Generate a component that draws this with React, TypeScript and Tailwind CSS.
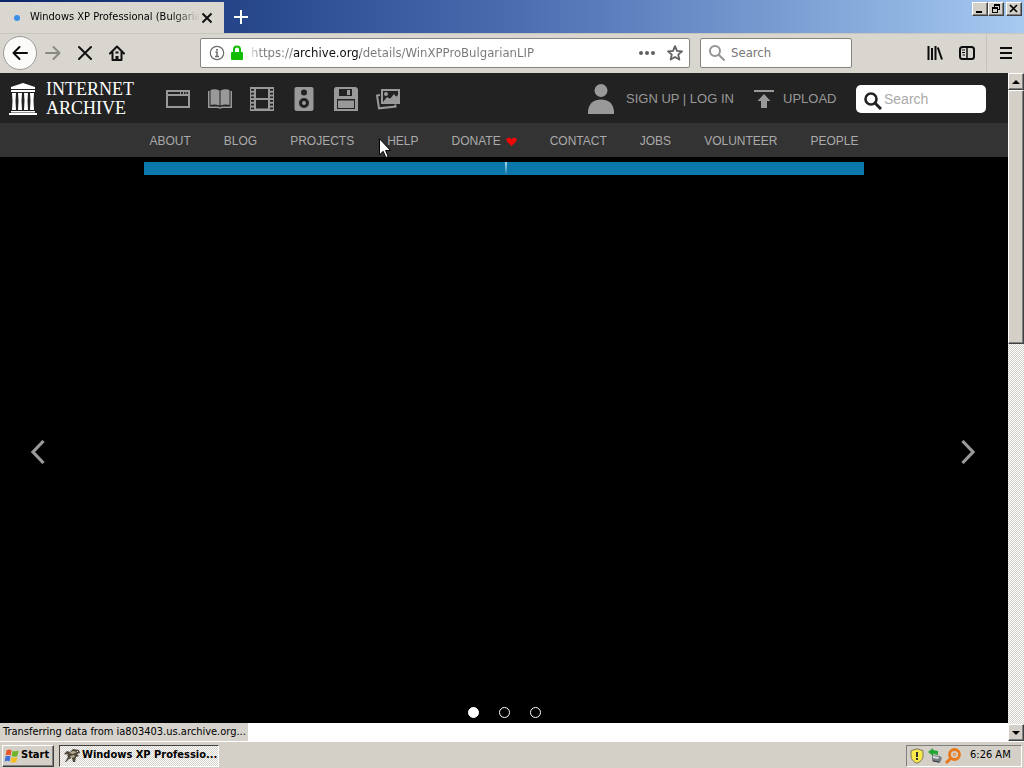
import React from "react";

const raised =
  "border border-t-white border-l-white border-r-[#404040] border-b-[#404040] bg-[#d4d0c8] shadow-[inset_-1px_-1px_0_#808080]";
const dither =
  "bg-[repeating-conic-gradient(#ffffff_0%_25%,#d4d0c8_0%_50%)] bg-[length:2px_2px]";

function TitleBar() {
  return (
    <header className="flex h-[33px] shrink-0 items-start justify-between bg-linear-to-r from-[#0a246a] via-[#4a6db0] to-[#a6caf0]">
      <div className="flex h-full items-end">
        <div className="flex h-[31px] w-[224px] items-center bg-[#dad7d1] pr-2">
          <span className="ml-[14px] size-[6px] shrink-0 rounded-full bg-[#3b8ee6]" />
          <span className="ml-[10px] w-[170px] shrink-0 whitespace-nowrap bg-linear-to-r from-black from-80% to-[#dad7d1] bg-clip-text text-[11px] text-transparent">
            Windows XP Professional (Bulgaria
          </span>
          <button aria-label="Close tab" className="flex size-[14px] shrink-0 items-center justify-center">
            <svg viewBox="0 0 12 12" className="size-[12px]" fill="none" stroke="#111" strokeWidth="2">
              <path d="M1.5 1.5l9 9M10.5 1.5l-9 9" />
            </svg>
          </button>
        </div>
        <button aria-label="New tab" className="flex h-[31px] w-[33px] items-center justify-center pb-[2px]">
          <svg viewBox="0 0 14 14" className="size-[14px]" fill="none" stroke="#fff" strokeWidth="2">
            <path d="M7 0v14M0 7h14" />
          </svg>
        </button>
      </div>
      <div className="flex pt-[2px] pr-[2px]">
        <button aria-label="Minimize" className={`flex h-[14px] w-[16px] items-center justify-center ${raised}`}>
          <svg viewBox="0 0 12 10" className="h-[10px] w-[12px]" shapeRendering="crispEdges">
            <path d="M2 7h6v2H2z" />
          </svg>
        </button>
        <button aria-label="Restore" className={`flex h-[14px] w-[16px] items-center justify-center ${raised}`}>
          <svg viewBox="0 0 12 10" className="h-[10px] w-[12px]" shapeRendering="crispEdges">
            <path d="M4 0h6v6H8V5h1V2H5v1H4zM2 3h6v6H2zM3 5v3h4V5z" fillRule="evenodd" />
          </svg>
        </button>
        <button aria-label="Close" className={`ml-[2px] flex h-[14px] w-[16px] items-center justify-center ${raised}`}>
          <svg viewBox="0 0 12 10" className="h-[10px] w-[12px]" fill="none" stroke="#000" strokeWidth="1.7">
            <path d="M2 1l7 7M9 1L2 8" />
          </svg>
        </button>
      </div>
    </header>
  );
}

function Toolbar() {
  return (
    <div className="flex h-[40px] shrink-0 items-center border-t border-[#c9c6c0] bg-[#d9d6d0] pb-[2px]">
      <div className="flex items-center pl-[3px]">
        <button aria-label="Back" className="flex size-[34px] items-center justify-center rounded-full border border-[#9b9995] bg-[#fbfbfa]">
          <svg viewBox="0 0 16 16" className="size-[16px]" fill="none" stroke="#0c0c0d" strokeWidth="2" strokeLinecap="round" strokeLinejoin="round">
            <path d="M15 8H1.5M7.500 2L1.500 8l6 6" />
          </svg>
        </button>
        <button aria-label="Forward" className="ml-2 flex size-[16px] items-center justify-center">
          <svg viewBox="0 0 16 16" className="size-[16px]" fill="none" stroke="#8b8984" strokeWidth="2" strokeLinecap="round" strokeLinejoin="round">
            <path d="M1 8h13.500M8.500 2l6 6-6 6" />
          </svg>
        </button>
        <button aria-label="Stop" className="ml-4 size-[16px]">
          <svg viewBox="0 0 16 16" className="size-[16px]" fill="none" stroke="#111" strokeWidth="2" strokeLinecap="round">
            <path d="M2 2l12 12M14 2L2 14" />
          </svg>
        </button>
        <button aria-label="Home" className="ml-4 size-[16px]">
          <svg viewBox="0 0 16 16" className="size-[16px]" fill="none" stroke="#111" strokeWidth="2" strokeLinecap="round" strokeLinejoin="round">
            <path d="M1 8.500l7-7 7 7M3.500 7.500V15h9V7.500" />
            <path d="M8 15v-4" strokeWidth="3" strokeLinecap="butt" />
            <path d="M6.500 6.500h3v2h-3z" fill="#111" stroke="none" />
          </svg>
        </button>
      </div>
      <div className="ml-[75px] flex h-[30px] flex-1 items-center rounded-[2px] border border-[#86847f] bg-white">
        <svg viewBox="0 0 16 16" className="ml-2 size-[16px]" fill="none" stroke="#6b6b6f" strokeWidth="1.200">
          <circle cx="8" cy="8" r="6.700" />
          <path d="M6.500 7H8v4.500M6 11.500h4" strokeWidth="1.500" />
          <path d="M7 4h2v1.600H7z" fill="#6b6b6f" stroke="none" />
        </svg>
        <svg viewBox="0 0 12 16" className="ml-[6px] h-[16px] w-[12px]">
          <path d="M3 8V4.500a3 3 0 0 1 6 0V8" fill="none" stroke="#12bc00" strokeWidth="2" />
          <rect y="7" width="12" height="8" rx="1" fill="#12bc00" />
        </svg>
        <input
          aria-label="Address"
          readOnly
          value="https://archive.org/details/WinXPProBulgarianLIP"
          className="ml-[8px] h-full min-w-0 flex-1 bg-[linear-gradient(to_right,#ddd_0px,#777_10px,#777_43px,#0c0c0d_43px,#0c0c0d_109px,#777_109px)] bg-clip-text text-[13px] text-transparent outline-none"
        />
        <button aria-label="Page actions" className="h-[16px] w-[16px]">
          <svg viewBox="0 0 16 16" fill="#606064">
            <circle cx="2" cy="8" r="2" />
            <circle cx="8" cy="8" r="2" />
            <circle cx="14" cy="8" r="2" />
          </svg>
        </button>
        <button aria-label="Bookmark" className="mr-[6px] ml-3 size-[16px]">
          <svg viewBox="0 0 16 16" fill="none" stroke="#606064" strokeWidth="1.800" strokeLinejoin="round">
            <path d="M8 1.200l2 4.600 5 .5-3.800 3.300 1.200 5L8 12l-4.400 2.600 1.200-5L1 6.300l5-.5z" />
          </svg>
        </button>
      </div>
      <div className="ml-[10px] flex h-[30px] w-[152px] items-center rounded-[2px] border border-[#86847f] bg-white">
        <svg viewBox="0 0 16 16" className="ml-2 size-[16px] shrink-0" fill="none" stroke="#939393" strokeWidth="2">
          <circle cx="6" cy="6" r="5" />
          <path d="M9.700 9.700L15.500 15.500" />
        </svg>
        <input aria-label="Web search" placeholder="Search" className="ml-[6px] w-full min-w-0 text-[13px] outline-none placeholder:text-[#777]" />
      </div>
      <div className="ml-[75px] flex h-full items-center">
        <button aria-label="Library" className="size-[16px]">
          <svg viewBox="0 0 16 16" fill="none" stroke="#0c0c0d" strokeWidth="2">
            <path d="M1.500 1v14M5 3v12M8.500 1v14M10.800 2.500L15 14.500" />
          </svg>
        </button>
        <button aria-label="Sidebars" className="ml-4 size-[16px]">
          <svg viewBox="0 0 16 16" fill="none" stroke="#0c0c0d" strokeWidth="2">
            <rect x="1" y="2" width="14" height="12" rx="2.500" />
            <path d="M8 2v12" strokeWidth="1.500" />
            <path d="M3 5h3M3 7.500h3M3.500 10H6" strokeWidth="1" />
          </svg>
        </button>
        <button aria-label="Menu" className="ml-[11px] flex h-full items-center border-l border-[#c6c3bd] pr-[11px] pl-[12px]">
          <svg viewBox="0 0 14 14" className="size-[14px]" fill="none" stroke="#0c0c0d" strokeWidth="2">
            <path d="M1 2h12M1 7h12M1 12h12" />
          </svg>
        </button>
      </div>
    </div>
  );
}

const media: { name: string; art: React.ReactNode }[] = [
  {
    name: "Web",
    art: <path fillRule="evenodd" d="M0 3h24v18H0zM2 9v10h20V9zM2 5v2h12V5zM15 5v2h2V5zM18 5v2h1.500V5zM20.500 5v2H22V5z" />,
  },
  {
    name: "Texts",
    art: (
      <>
        <path d="M2.500 3Q7 1.500 11.500 3.500V18.500Q7 17 2.500 18zM12.500 3.500Q17 1.500 21.500 3V18Q17 17 12.500 18.500z" />
        <path d="M0 4h1.500v15.500H10l2 .8 2-.8h8.500V4H24v17H14.500l-2.500.8-2.500-.8H0z" />
      </>
    ),
  },
  {
    name: "Video",
    art: (
      <>
        <path fillRule="evenodd" d="M4 0h16v24H4zM6 2v9h12V2zM6 13v8.500h12V13z" />
        <path d="M2.500 0v24M21.500 0v24" stroke="#999" strokeWidth="4" strokeDasharray="2 1.700" />
        <path d="M.5 0v24M23.500 0v24" stroke="#999" />
      </>
    ),
  },
  {
    name: "Audio",
    art: (
      <>
        <rect x="2.500" width="19" height="24" rx="2" />
        <circle cx="12" cy="5.500" r="3" fill="#222" />
        <circle cx="12" cy="16" r="5" fill="#222" />
        <circle cx="12" cy="16" r="2" />
      </>
    ),
  },
  {
    name: "Software",
    art: (
      <>
        <path d="M0 1.500L1.500 0H22l2 2v22H0z" />
        <path d="M5 2h13v7H5zM3 12h18v10H3z" fill="#222" />
        <path d="M13 3h3v5h-3zM3 13.500h18V22H3z" />
        <path d="M3 21h18v1H3zM3 12h1v10H3zM20 12h1v10h-1z" fill="#222" />
      </>
    ),
  },
  {
    name: "Images",
    art: (
      <>
        <path fillRule="evenodd" d="M5 2h19v15H5zM7 4v11l4-5 3 2 4-5 2 3 2-2V4z" />
        <path d="M8 15l4-4 3 1 3-4 4 3v4z" />
        <circle cx="10" cy="7" r="2" />
        <path d="M4 8L1 8.500l2 12.800 16.500-1.800-.3-2" fill="none" stroke="#999" strokeWidth="2" />
      </>
    ),
  },
];

function ArchiveHeader() {
  return (
    <div className="flex h-[50px] shrink-0 items-center bg-[#222] pt-[2px] font-['Liberation_Sans',sans-serif] text-[13px] text-[#999]">
      <a href="#home" className="ml-[9px] flex items-center text-white">
        <svg viewBox="0 0 28 32" className="h-[32px] w-[28px]" fill="#fff">
          <path d="M14 0l12 4v2H2V4zM2 7h24v2H2zM2 28h24v1.500H2zM0 30h28v2H0z" />
          <path d="M3 10h4l-.5 8 .5 9H3l.5-9zM9 10h4l-.5 8 .5 9H9l.5-9zM15 10h4l-.5 8 .5 9h-4l.5-9zM21 10h4l-.5 8 .5 9h-4l.5-9z" />
        </svg>
        <span className="ml-[9px] flex w-[104px] flex-col font-['Liberation_Serif',serif] text-[18px] leading-[19px]">
          <span>INTERNET</span>
          <span>ARCHIVE</span>
        </span>
      </a>
      <nav aria-label="Media types" className="ml-[16px] flex gap-[18px]">
        {media.map((m) => (
          <a key={m.name} href={`#${m.name}`} aria-label={m.name}>
            <svg viewBox="0 0 24 24" className="size-[24px]" fill="#999">
              {m.art}
            </svg>
          </a>
        ))}
      </nav>
      <div className="ml-auto flex items-center">
        <a href="#login" className="flex items-center">
          <svg viewBox="0 0 26 30" className="mr-[12px] h-[30px] w-[26px]" fill="#999">
            <circle cx="13" cy="6.500" r="6.500" />
            <path d="M0 30v-3C1 19 6 15.500 13 15.500S25 19 26 27v3z" />
          </svg>
          <span className="w-[128px]">SIGN UP | LOG IN</span>
        </a>
        <a href="#upload" className="flex items-center">
          <svg viewBox="0 0 20 20" className="mr-[9px] size-[20px]" fill="#999">
            <path d="M0 1h20v2H0zM10 5l6.500 7H13v7H7v-7H3.500z" />
          </svg>
          <span className="w-[73px]">UPLOAD</span>
        </a>
        <label className="mr-[22px] flex h-[28px] w-[130px] items-center rounded-[5px] bg-white pl-2">
          <svg viewBox="0 0 18 18" className="mt-1 size-[18px] shrink-0" fill="none" stroke="#222">
            <circle cx="7" cy="7" r="5.500" strokeWidth="2.600" />
            <path d="M11 11l6 6" strokeWidth="3" />
          </svg>
          <input aria-label="Search archive" placeholder="Search" className="ml-[2px] w-full min-w-0 text-[14px] outline-none placeholder:text-[#aaa]" />
        </label>
      </div>
    </div>
  );
}

const links = ["ABOUT", "BLOG", "PROJECTS", "HELP", "DONATE", "CONTACT", "JOBS", "VOLUNTEER", "PEOPLE"];

function ArchivePage() {
  return (
    <main className="flex min-w-0 flex-1 flex-col bg-white">
      <ArchiveHeader />
      <nav aria-label="Site" className="flex h-[34px] shrink-0 items-center justify-center gap-[33px] bg-[#333] pt-[2px] font-['Liberation_Sans',sans-serif] text-[12px] text-[#aaa]">
        {links.map((l) => (
          <a key={l} href={`#${l}`} className="flex items-center">
            {l}
            {l === "DONATE" && (
              <svg viewBox="0 0 12 10" className="ml-[5px] h-[9px] w-[11px]" fill="#f00808">
                <path d="M6 10L.8 5C-.8 2.500 1 .8 3 .8 4.500.8 5.500 1.500 6 2.500 6.500 1.500 7.500.8 9 .8c2 0 3.800 1.700 2.200 4.200z" />
              </svg>
            )}
          </a>
        ))}
      </nav>
      <section aria-label="Carousel" className="mb-[18px] flex flex-1 flex-col items-center bg-black">
        <div className="mt-[5px] flex h-[13px] w-[720px] max-w-full justify-center bg-[#0b77aa]">
          <div className="ml-1 h-full w-[2px] bg-linear-to-b from-[#a5dcef] to-[#0b77aa]" />
        </div>
        <div className="flex w-full flex-1 items-center justify-between pt-[22px] pr-[32px] pl-[30px]">
          <button aria-label="Previous">
            <svg viewBox="0 0 15 24" className="h-[24px] w-[15px]" fill="none" stroke="#999" strokeWidth="3.200">
              <path d="M13.500 1L3 12l10.500 11" />
            </svg>
          </button>
          <button aria-label="Next">
            <svg viewBox="0 0 15 24" className="h-[24px] w-[15px]" fill="none" stroke="#999" strokeWidth="3.200">
              <path d="M1.500 1L12 12 1.500 23" />
            </svg>
          </button>
        </div>
        <div className="flex gap-[20px] pb-[5px]">
          <button aria-label="Slide 1" className="size-[11px] rounded-full border border-white bg-white" />
          <button aria-label="Slide 2" className="size-[11px] rounded-full border border-white" />
          <button aria-label="Slide 3" className="size-[11px] rounded-full border border-white" />
        </div>
      </section>
    </main>
  );
}

function ScrollBar() {
  return (
    <div className={`flex w-[16px] shrink-0 flex-col ${dither}`}>
      <button aria-label="Scroll up" className={`flex h-[17px] shrink-0 items-center justify-center ${raised}`}>
        <svg viewBox="0 0 8 4" className="h-[4px] w-[8px]">
          <path d="M4 0l4 4H0z" />
        </svg>
      </button>
      <div className="flex-1">
        <div className={`h-2/5 ${raised}`} />
      </div>
      <button aria-label="Scroll down" className={`flex h-[17px] shrink-0 items-center justify-center ${raised}`}>
        <svg viewBox="0 0 8 4" className="h-[4px] w-[8px]">
          <path d="M0 0h8L4 4z" />
        </svg>
      </button>
    </div>
  );
}

function TaskBar() {
  return (
    <footer className="flex h-[27px] shrink-0 items-center border-t border-white bg-[#d4d0c8] px-[2px] pt-[1px] text-[11px]">
      <button className={`flex h-[22px] w-[52px] items-center gap-[1px] pl-[1px] font-bold ${raised}`}>
        <svg viewBox="0 0 16 16" className="size-[16px] shrink-0">
          <path d="M2.500 2.500Q5 .8 7.500 2.300L6.700 7.500Q4 6 1.700 7.500z" fill="#e8562a" />
          <path d="M8.500 2.800Q11 4 14.500 2.500L13.500 8Q10.500 9.300 7.700 8z" fill="#71b52d" />
          <path d="M1.500 8.500Q4 7 6.500 8.500L5.600 13.500Q3.500 12 .7 13.500z" fill="#3f72d8" />
          <path d="M7.500 9Q10 10.300 13.300 9l-1 5Q9.500 15.500 6.600 14z" fill="#f3bc22" />
        </svg>
        Start
      </button>
      <button className={`ml-[5px] flex h-[22px] w-[160px] items-center gap-[2px] border border-t-[#404040] border-r-white border-b-white border-l-[#404040] pl-1 font-bold whitespace-nowrap ${dither}`}>
        <svg viewBox="0 0 16 16" className="size-[16px] shrink-0">
          <path d="M0 6l3-3 3 1 3-3 6 1 1 3-3 1 2 2-3 1-1 5h-2l-1-4-3 1-3 3H1l3-5-1-2z" fill="#4c4638" />
          <path d="M5 5l4-2 4 1-4 2zM6 8l4-1 1 2-4 1z" fill="#b9ad91" />
          <path d="M1 7l3-1-1 2zM13 3h1v1h-1z" fill="#eee" />
        </svg>
        Windows XP Professio...
      </button>
      <div className="ml-auto flex h-[22px] w-[116px] items-center border border-t-[#808080] border-r-white border-b-white border-l-[#808080] pl-[2px]">
        <svg viewBox="0 0 16 16" className="size-[16px]">
          <path d="M8 .8l6 2v5c0 4-3 6-6 7.500C5 13.800 2 11.800 2 7.800v-5z" fill="#f9e94a" stroke="#77765f" />
          <path d="M7 4h2v5H7zM7 10h2v2H7z" fill="#333" />
        </svg>
        <svg viewBox="0 0 16 16" className="ml-[2px] size-[16px]">
          <path d="M5 7l8 1 2 2-2 5-8-2z" fill="#777d80" />
          <path d="M6 8l6 1-1 2-5-1z" fill="#d8dde0" />
          <path d="M1 4l5-4v2l5 1v4L6 6v2z" fill="#25a535" />
          <path d="M6 13l6 1" stroke="#333" />
        </svg>
        <svg viewBox="0 0 18 16" className="ml-[1px] h-[16px] w-[18px]" fill="none" stroke="#e97819">
          <circle cx="10.500" cy="6.500" r="5" strokeWidth="2.800" />
          <circle cx="10.500" cy="6.500" r="1.200" strokeWidth="1" />
          <path d="M7 10l-5 5" strokeWidth="3" />
        </svg>
        <time className="ml-[8px] whitespace-nowrap">6:26 AM</time>
      </div>
    </footer>
  );
}

export default function App() {
  return (
    <div className="relative flex h-screen flex-col overflow-hidden bg-[#d4d0c8] font-['DejaVu_Sans_Condensed','DejaVu_Sans',sans-serif] text-black">
      <TitleBar />
      <Toolbar />
      <div className="relative flex min-h-0 flex-1">
        <ArchivePage />
        <ScrollBar />
        <div role="status" className="absolute bottom-0 left-0 flex h-[18px] w-[248px] items-center bg-[#d6d3cd] pl-[3px] text-[11px] whitespace-nowrap">
          Transferring data from ia803403.us.archive.org...
        </div>
      </div>
      <TaskBar />
      <svg viewBox="0 0 12 21" className="pointer-events-none absolute top-[138px] left-[379px] h-[21px] w-[12px]">
        <path d="M.5.800v16l3.700-3.500 2.600 6.200 2.400-1-2.600-6h5z" fill="#fff" stroke="#000" />
      </svg>
    </div>
  );
}
